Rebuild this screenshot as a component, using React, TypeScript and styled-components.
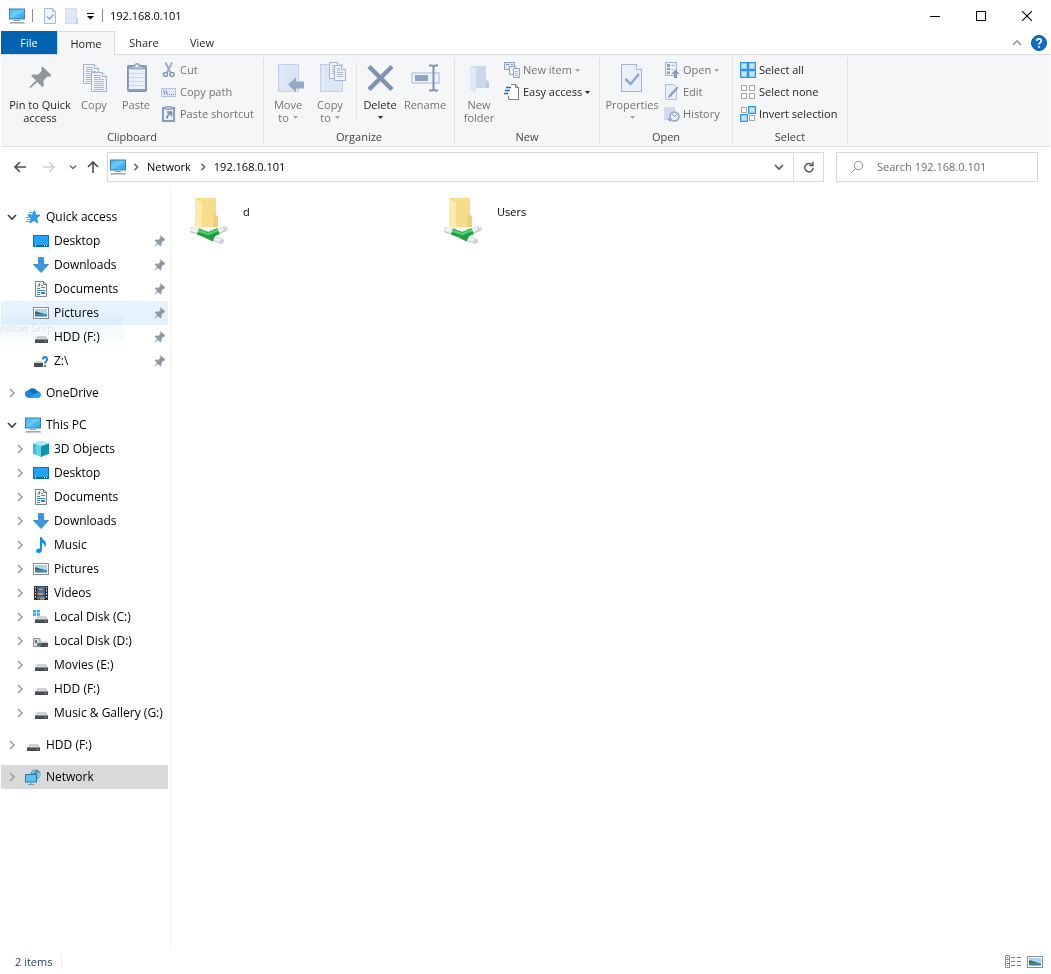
import React from 'react';
import styled, { createGlobalStyle, css } from 'styled-components';

const GlobalStyle = createGlobalStyle`
  *, *::before, *::after { box-sizing: border-box; }
  body {
    margin: 0;
    background: #fff;
    color: #000;
    font: 11px/16px "Open Sans", "Noto Sans", sans-serif;
  }
  button, input {
    font: inherit;
    color: inherit;
    margin: 0;
    padding: 0;
    border: 0;
    background: none;
  }
  ul { list-style: none; margin: 0; padding: 0; }
  a { color: inherit; text-decoration: none; }
  svg { display: block; flex: none; }
`;

/* ---------- icons ---------- */

const Svg = ({ w, h, children }: { w: number; h: number; children: React.ReactNode }) => (
  <svg width={w} height={h} viewBox={`0 0 ${w} ${h}`} fill="none" aria-hidden="true">
    {children}
  </svg>
);

const ComputerIcon = () => (
  <Svg w={16} h={16}>
    <defs>
      <linearGradient id="screen" x1="0" y1="0" x2="1" y2="1">
        <stop offset="0" stopColor="#3fb4f5" />
        <stop offset="0.5" stopColor="#6ecbfb" />
        <stop offset="0.55" stopColor="#4dbcf8" />
        <stop offset="1" stopColor="#2fa6ee" />
      </linearGradient>
    </defs>
    <rect x="0.5" y="1" width="15" height="10" fill="url(#screen)" stroke="#3f7fa8" />
    <path d="M7 11.500h2.500V13H7z" fill="#c4ced6" />
    <path d="M5 12.500h6" stroke="#8fa0ae" />
    <path d="M1 14.500h14.500" stroke="#9aa8b8" />
    <path d="M0 15.500h16" stroke="#c3ccd6" />
  </Svg>
);

const TitleCheckIcon = () => (
  <Svg w={14} h={16}>
    <path d="M1.5.5h8l3 3v12h-11z" fill="#eef4fc" stroke="#a9bbd4" />
    <path d="M9.500.5v3h3" stroke="#a9bbd4" />
    <path d="M4 8.500l2.500 2.500 4-4.500" stroke="#8fa3c2" strokeWidth="1.500" />
  </Svg>
);

const TitleFolderIcon = () => (
  <Svg w={14} h={16}>
    <path d="M.5.5h11v10h1.500v5H.5z" fill="#dfe8f6" stroke="#cfdbee" />
    <path d="M11.500 10.500v5" stroke="#b9c9e2" />
  </Svg>
);

const PinIcon = () => (
  <Svg w={32} h={32}>
    <g fill="#8e979c">
      <path d="M18.500 4.500l8.800 8.500-1.300 1.800-2.500-.3-4 4 .3 5-1.500 1.500-5-5L6.500 26l-1-1 6.500-6.500-4.800-4.500L8.800 12.500l5 .3 4-4-.6-2.600z" />
    </g>
  </Svg>
);

const SmallPin = () => (
  <Svg w={12} h={12}>
    <path d="M7 .5l4.500 4.500-1 .8-1-.3L7.500 8v2.500l-1 1L4 9 .8 11.500l-.3-.3L3 8 .8 5.600l1-1 2.600.1 2.200-2L6 1.500z" fill="#8d99a1" />
  </Svg>
);

const sheet = '#a3b4d0';
const Sheet = ({ x, y, w, h, n }: { x: number; y: number; w: number; h: number; n: number }) => (
  <g transform={`translate(${x} ${y})`}>
    <path d={`M.5.5h${w - 5}l4 4v${h - 5}H.5z`} fill="#eef3fb" stroke={sheet} />
    <path d={`M${w - 4.5}.5v4h4`} stroke={sheet} fill="#fff" />
    {Array.from({ length: n }, (_, i) => (
      <path key={i} d={`M3 ${3.5 + i * 2}h${i < 2 ? w - 9 : w - 6}`} stroke="#a9bbd8" />
    ))}
  </g>
);

const CopyIcon = () => (
  <Svg w={32} h={32}>
    <Sheet x={5} y={2} w={16} h={20} n={8} />
    <Sheet x={13} y={10} w={16} h={20} n={8} />
  </Svg>
);

const PasteIcon = () => (
  <Svg w={32} h={32}>
    <rect x="7.500" y="3.500" width="19" height="26" rx="1" fill="#8ca0c4" stroke="#7e92b8" />
    <rect x="9" y="7" width="16" height="20" fill="#eaf1fb" />
    <path d="M9 11.500h16M9 15.500h16M9 19.500h16M9 23.500h16" stroke="#cbd8ea" />
    <path d="M11 7V4.500h3a3 3 0 0 1 6 0h3V7z" fill="#b5c0d2" stroke="#93a2bd" />
    <circle cx="17" cy="4" r="1" fill="#fff" />
  </Svg>
);

const CutIcon = () => (
  <Svg w={16} h={16}>
    <path d="M4.500 0.500l5 10M11 .5l-5 10" stroke="#9dabc1" strokeWidth="1.800" />
    <circle cx="4.500" cy="12.500" r="2" stroke="#8497b8" strokeWidth="1.600" />
    <circle cx="11" cy="12.500" r="2" stroke="#8497b8" strokeWidth="1.600" />
  </Svg>
);

const CopyPathIcon = () => (
  <Svg w={16} h={16}>
    <rect x=".5" y="4.500" width="14" height="8" fill="#dfe8f5" stroke="#b3c2da" />
    <path d="M2.500 6.500l1.500 4M5 6.500l1.500 4" stroke="#6a7ea4" />
    <path d="M8 10.500h1M10 10.500h1M12 10.500h1" stroke="#6a7ea4" />
  </Svg>
);

const PasteShortcutIcon = () => (
  <Svg w={16} h={16}>
    <rect x="2" y="2" width="11" height="13" fill="#eaf1fb" stroke="#8a9dc0" strokeWidth="2" />
    <path d="M4.500.5h6v3h-6z" fill="#b5c2d8" stroke="#93a5c4" />
    <path d="M6 6h4.500v4.500M10 6.500C7.500 8 6 9 6 12.500" stroke="#7387ae" strokeWidth="1.600" />
  </Svg>
);

const MoveToIcon = () => (
  <Svg w={32} h={32}>
    <path d="M6.500 2.500h20v27h-20z" fill="#dbe5f4" stroke="#c3d1e8" />
    <path d="M9.500 3v26" stroke="#e8effa" />
    <path d="M16 22.500l8-7v4h8v7h-8v4z" fill="#96a6c5" />
  </Svg>
);

const CopyToIcon = () => (
  <Svg w={32} h={32}>
    <path d="M6.500 2.500h22v27h-22z" fill="#dbe5f4" stroke="#c3d1e8" />
    <path d="M9.500 3v26" stroke="#e8effa" />
    <Sheet x={15} y={0} w={13} h={17} n={5} />
    <Sheet x={20} y={3} w={12} h={16} n={5} />
  </Svg>
);

const DeleteIcon = () => (
  <Svg w={32} h={32}>
    <path d="M5 4.500l23 23M28 4.500l-23 23" stroke="#7f92b6" strokeWidth="4.500" />
  </Svg>
);

const RenameIcon = () => (
  <Svg w={32} h={32}>
    <rect x="3" y="11" width="27" height="10" fill="#eef4fc" stroke="#a7b9d4" strokeWidth="1" />
    <rect x="6" y="13" width="13" height="6" fill="#8fa2c3" />
    <path d="M20 3.500h2.500q2 0 2 2q0-2 2-2H29M20 28.500h2.500q2 0 2-2q0 2 2 2H29M24.500 5v22" stroke="#7f92b6" strokeWidth="2" />
  </Svg>
);

const NewFolderIcon = () => (
  <Svg w={32} h={32}>
    <path d="M9 4h14v14l3 2v6H9z" fill="#ccd9ea" />
    <path d="M7 3l6 4v24l-6-4z" fill="#dfe9f6" />
    <path d="M23 18l3 2v6h-3z" fill="#bccce0" />
  </Svg>
);

const NewItemIcon = () => (
  <Svg w={16} h={16}>
    <rect x=".5" y=".5" width="10" height="7" fill="#dfe8f5" stroke="#90a4c6" />
    <path d="M2 2.500h3M7 2.500h2" stroke="#7f92b6" />
    <path d="M5.500 4.500h6v8h-6z" fill="#eef4fc" stroke="#90a4c6" />
    <path d="M9.500 6.500h6v9h-6z" fill="#eef4fc" stroke="#90a4c6" />
    <path d="M11 9.500h3M11 11.500h3M11 13.500h3" stroke="#a9bbd8" />
  </Svg>
);

const EasyAccessIcon = () => (
  <Svg w={16} h={16}>
    <path d="M4.500 8.500v7h10v-12l-3-3h-7z" fill="#fff" />
    <path d="M7 .5h4.500l3 3v12h-10V12" stroke="#7f7f7f" />
    <path d="M11.500.5v3h3" stroke="#7f7f7f" />
    <path d="M2 3.500h5M1 6.500h5M0 9.500h4" stroke="#1d6fae" strokeWidth="1.500" />
  </Svg>
);

const PropertiesIcon = () => (
  <Svg w={32} h={32}>
    <path d="M5.500 2.500h15l5 5v22h-20z" fill="#e8f0fb" stroke="#a3b4d0" />
    <path d="M20.500 2.500v5h5" fill="#fff" stroke="#a3b4d0" />
    <path d="M9.500 17l5 5 8.500-10" stroke="#94a6c6" strokeWidth="2.500" />
  </Svg>
);

const OpenIcon = () => (
  <Svg w={16} h={16}>
    <rect x="1.500" y=".5" width="11" height="13" fill="#edf3fb" stroke="#a3b4d0" />
    <path d="M3 2h3v3H3zM3 6h3v2H3zM3 9.500h3v2.500H3z" fill="#8c9fc1" />
    <path d="M7.500 3.500h3.500M7.500 7.500h2" stroke="#a3b4d0" />
    <path d="M11.500 7.500l4 4.500h-2.500v4h-3v-4H7.500z" fill="#8699bc" />
  </Svg>
);

const EditIcon = () => (
  <Svg w={16} h={16}>
    <path d="M1.500.5h8l3 3v12h-11z" fill="#e8f0fb" stroke="#b0c0d9" />
    <path d="M4 14l1-3 8-8.500 1.500 1.500-8 9z" fill="#8c9fc1" />
  </Svg>
);

const HistoryIcon = () => (
  <Svg w={16} h={16}>
    <path d="M0 1h11v13H0z" fill="#d0dcee" />
    <circle cx="10.500" cy="10.500" r="4.500" fill="#e6eefa" stroke="#92a4c3" strokeWidth="1.500" />
    <path d="M8 8l2.500 2.500L13 8" stroke="#7f92b6" />
    <path d="M4 13l3 2" stroke="#92a4c3" strokeWidth="2" />
  </Svg>
);

type TileState = [boolean, boolean, boolean, boolean];
const SelectIcon = ({ on }: { on: TileState }) => {
  const spots = [[0, 0], [8, 0], [0, 8], [8, 8]];
  return (
    <Svg w={16} h={16}>
      {spots.map(([x, y], i) =>
        on[i] ? (
          <g key={i}>
            <rect x={x} y={y} width="8" height="8" fill="#2f93dd" />
            <rect x={x + 1} y={y + 1} width="6" height="6" fill="#8fd0fb" />
            <rect x={x + 2} y={y + 2} width="4" height="4" fill="#c4e6fd" />
          </g>
        ) : (
          <rect key={i} x={x + 1.5} y={y + 1.5} width="5" height="5" fill="#fff" stroke="#a5a5a5" />
        ),
      )}
    </Svg>
  );
};

const Caret = ({ color }: { color: string }) => (
  <Svg w={5} h={3}>
    <path d="M0 0h5L2.500 3z" fill={color} />
  </Svg>
);

const Chevron = ({ dir, color, size = 10 }: { dir: 'right' | 'down' | 'up'; color: string; size?: number }) => {
  const paths = { right: 'M3 1l4 4-4 4', down: 'M1 3l4 4 4-4', up: 'M1 7l4-4 4 4' };
  return (
    <svg width={size} height={size} viewBox="0 0 10 10" fill="none" aria-hidden="true">
      <path d={paths[dir]} stroke={color} strokeWidth="1.700" />
    </svg>
  );
};

const Arrow = ({ dir, color }: { dir: 'left' | 'right' | 'up'; color: string }) => {
  const paths = {
    left: 'M13 7H2M7 2L2 7l5 5',
    right: 'M1 7h11M7 2l5 5-5 5',
    up: 'M7 13V2M2 7l5-5 5 5',
  };
  return (
    <Svg w={14} h={14}>
      <path d={paths[dir]} stroke={color} strokeWidth="1.600" />
    </Svg>
  );
};

const StarIcon = () => (
  <Svg w={16} h={16}>
    <path d="M9.500 1.500l1.300 4.500 4.200.2-3.400 3 1.200 4.800-4-2.500L5 14l1-4.500L3 6.500l4.500-.4z" fill="#2ba2f0" stroke="#1c7fcb" strokeWidth=".7" />
    <path d="M4 3.500h4M3 5.500h3M1 8.500h4M2 10.500h3M1 12.500h4" stroke="#4bb1f2" />
  </Svg>
);

const DesktopIcon = () => (
  <Svg w={16} h={16}>
    <rect x=".5" y="2.500" width="15" height="11" fill="#1fa3f8" stroke="#0f6fb8" />
    <path d="M1 12.500h14" stroke="#0b5e9f" />
    <path d="M2 12.500h1M11 12.500h1M13 12.500h1" stroke="#fff" />
  </Svg>
);

const DownloadIcon = () => (
  <Svg w={16} h={16}>
    <path d="M5.500.5h5v7h5L8 15.500.5 7.500h5z" fill="#3d96e3" stroke="#2f80cc" strokeWidth=".8" />
  </Svg>
);

const DocumentIcon = () => (
  <Svg w={16} h={16}>
    <path d="M2.500.5h8l3 3v12h-11z" fill="#fff" stroke="#7d8387" />
    <path d="M10.500.5v3h3" stroke="#7d8387" />
    <path d="M4.500 5.500L6.500 2.500v3M8 4.500h2M8 6.500h4M4 7.500h3M4 9.500h8M4 11.500h3M4 13.500h3" stroke="#2f8bc9" />
    <path d="M8 11h4v2H8z" fill="#3f7fae" />
  </Svg>
);

const PictureIcon = () => (
  <Svg w={16} h={16}>
    <rect x=".5" y="2.500" width="15" height="11" fill="#fff" stroke="#8d8d8d" />
    <path d="M2 4h12v8H2z" fill="#a9d4f6" />
    <path d="M2 6.500c4 0 6 2 12 3H2z" fill="#3e6b5e" />
    <path d="M2 9.500h12V11H2z" fill="#3877ae" />
    <path d="M2 11h12v1H2z" fill="#8fc0e4" />
  </Svg>
);

const Drive = () => (
  <g>
    <path d="M4 6h9l2 3.500H2z" fill="#d2d4d6" />
    <path d="M2 9h13v4H2z" fill="#4a4d50" />
    <path d="M2 9.500h13" stroke="#8d9092" />
    <path d="M12 11.500h1" stroke="#3fe05a" />
  </g>
);

const DriveIcon = () => (
  <Svg w={16} h={16}>
    <g transform="translate(0 1)">
      <Drive />
    </g>
  </Svg>
);

const UnknownDriveIcon = () => (
  <Svg w={16} h={16}>
    <path d="M3 8h6l1 2H1z" fill="#d2d4d6" />
    <path d="M1 10h9v4H1z" fill="#4a4d50" />
    <path d="M10 6.500Q10 4 12 4T14 6.500Q14 8 12.800 8.700Q12 9.300 12 10.500M12 12v2" stroke="#1f7fd0" strokeWidth="2" />
  </Svg>
);

const SystemDriveIcon = () => (
  <Svg w={16} h={16}>
    <g transform="translate(0 1)">
      <Drive />
    </g>
    <path d="M0 1h3v2.500H0zM3.800 1h3v2.500h-3zM0 4.300h3v2.500H0zM3.800 4.300h3v2.500h-3z" fill="#12b4ef" />
  </Svg>
);

const SharedDriveIcon = () => (
  <Svg w={16} h={16}>
    <path d="M8 8h6l1 2H7z" fill="#d2d4d6" />
    <path d="M7 10h8v4H7z" fill="#4a4d50" />
    <path d="M.5 5.500h6.500v8H.5z" fill="#d9dfdd" stroke="#8c9494" />
    <path d="M2 7h2v3H2zM4 10h3v3H4z" fill="#5f7a80" />
    <path d="M13 12.500h1" stroke="#3fe05a" />
  </Svg>
);

const CloudIcon = () => (
  <Svg w={16} h={16}>
    <path d="M4 12.500a3.500 3.500 0 0 1-.5-7A4.800 4.800 0 0 1 12 6a3.300 3.300 0 0 1 .5 6.500z" fill="#0f6cc4" />
    <path d="M4 12.500a3.500 3.500 0 0 1-.5-7L9 8.500l3.500 4z" fill="#1a86de" />
    <path d="M4 12.800l6-4 4-1.800a3 3 0 0 1-1.500 5.800z" fill="#2ba0f0" />
  </Svg>
);

const CubeIcon = () => (
  <Svg w={16} h={16}>
    <path d="M8 0l8 2.500v10L8 16 0 12.500v-10z" fill="#5fd3e4" />
    <path d="M8 5l8-2.500v10L8 16z" fill="#0c92ae" />
    <path d="M8 0l8 2.500L8 5 0 2.500z" fill="#a4ebf3" />
    <path d="M0 2.500L3 3.500v10L0 12.500z" fill="#35bcd3" />
  </Svg>
);

const MusicIcon = () => (
  <Svg w={16} h={16}>
    <path d="M7 0h1.800c.3 3 4.200 3.500 4.200 7 0 1.500-.6 2.500-1.500 3.500.6-2.500-.5-4-2.500-4.700V13c0 1.700-1.500 3-3.500 3C3.800 16 3 15.100 3 14c0-1.600 1.800-2.700 4-2.500z" fill="#0f93ea" />
  </Svg>
);

const VideoIcon = () => (
  <Svg w={16} h={16}>
    <path d="M1 1h14v14H1z" fill="#2d2d2d" />
    <path d="M2.500 2v12M13.500 2v12" stroke="#e8e8e8" strokeDasharray="1.500 1.500" />
    <path d="M4 1.500h8v4H4zM4 6h8v4H4zM4 10.500h8v4H4z" fill="#3b6fb8" />
    <path d="M6 3.500h4v2H6zM5 8h5v2H5zM7 12.500h4v2H7z" fill="#d99a36" />
  </Svg>
);

const NetworkIcon = () => (
  <Svg w={16} h={16}>
    <circle cx="10.500" cy="5.500" r="5" fill="#3f8dbb" />
    <path d="M7 3q3-3 4-2l-1 2-3 2zM12 3l3 1v4l-3 1z" fill="#8cc6e2" />
    <rect x=".5" y="5.500" width="11" height="7.500" fill="#5cc4fb" stroke="#2777a8" />
    <path d="M6 13v2M3 15.500h6" stroke="#7795a8" />
  </Svg>
);

const SharedFolderIcon = () => (
  <Svg w={40} h={48}>
    <path d="M5 1h21v17l2 2v10H5z" fill="#f7dc8c" />
    <path d="M24 16l4 4v10h-5z" fill="#f0ce72" />
    <path d="M5 1l7 5v27l-7-4z" fill="#fdebae" />
    <path d="M2 33l8 2M27 35l8-3.500M22 41l9 3" stroke="#bfc5c5" strokeWidth="5.500" strokeLinecap="round" />
    <path d="M2 32.500l8 2M27 34.500l8-3.500M22 40.500l8 3" stroke="#eff1f1" strokeWidth="4" strokeLinecap="round" />
    <path d="M8 34.500l8 3 8 4M17 39l11.500-5" stroke="#1f9e45" strokeWidth="6.500" strokeLinejoin="round" />
    <path d="M8 33.500l9 3M17 37.500l11-4.500" stroke="#4fd06c" strokeWidth="2.500" />
    <circle cx="34.500" cy="31.500" r="1.500" fill="#cfd4d4" />
    <circle cx="30.500" cy="44" r="1.500" fill="#cfd4d4" />
  </Svg>
);

/* ---------- window frame ---------- */

const Window = styled.div`
  display: flex;
  flex-direction: column;
  min-height: 100vh;
  padding: 0 1px;
`;

const TitleBar = styled.header`
  display: flex;
  align-items: center;
  height: 31px;
  padding-left: 8px;
`;

const TitleRule = styled.span`
  width: 1px;
  height: 13px;
  margin: 0 7px;
  background: #8a8a8a;
`;

const QuickTools = styled.div`
  display: flex;
  align-items: center;
  gap: 8px;
  margin-left: 3px;
`;

const IconButton = styled.button<{ $w?: number; $h?: number }>`
  display: flex;
  align-items: center;
  justify-content: center;
  flex: none;
  width: ${({ $w }) => ($w ? `${$w}px` : 'auto')};
  height: ${({ $h }) => ($h ? `${$h}px` : 'auto')};
`;

const Title = styled.h1`
  flex: 1;
  margin: 0;
  font-size: 11px;
  line-height: 16px;
  font-weight: 400;
`;

const TabBar = styled.nav`
  display: flex;
  height: 24px;
  border-bottom: 1px solid #dadbdc;
`;

const Tab = styled.button<{ $kind?: 'file' | 'active' }>`
  width: 58px;
  height: 23px;
  color: #262626;
  ${({ $kind }) =>
    $kind === 'file' &&
    css`
      width: 56px;
      background: #0063b1;
      color: #fff;
    `}
  ${({ $kind }) =>
    $kind === 'active' &&
    css`
      height: 24px;
      border: 1px solid #dadbdc;
      border-bottom: 0;
      background: #f5f6f7;
    `}
`;

const TabActions = styled.div`
  display: flex;
  align-items: center;
  gap: 9px;
  margin-left: auto;
  padding-right: 3px;
`;

/* ---------- ribbon ---------- */

const Ribbon = styled.div`
  display: flex;
  height: 92px;
  padding: 3px 0 2px;
  background: #f5f6f7;
  border-bottom: 1px solid #dadbdc;
`;

const Group = styled.section<{ $w: number }>`
  display: flex;
  flex-direction: column;
  flex: none;
  width: ${({ $w }) => $w}px;
  border-right: 1px solid #e1e2e3;
  padding: 0 3px;
`;

const GroupBody = styled.div`
  display: flex;
  flex: 1;
`;

const GroupName = styled.h2`
  margin: 0;
  font-size: 11px;
  line-height: 14px;
  font-weight: 400;
  text-align: center;
  color: #444;
`;

const BigButton = styled.button<{ $w: number; $off?: boolean }>`
  display: flex;
  flex-direction: column;
  align-items: center;
  flex: none;
  width: ${({ $w }) => $w}px;
  padding-top: 4px;
  line-height: 13px;
  white-space: nowrap;
  color: ${({ $off }) => ($off ? '#737373' : '#262626')};
`;

const BigLabel = styled.span`
  display: flex;
  flex-direction: column;
  align-items: center;
  margin-top: 4px;
`;

const LabelLine = styled.span`
  display: flex;
  align-items: center;
  gap: 4px;
  min-height: 12px;
`;

const GroupRule = styled.span`
  width: 1px;
  height: 56px;
  margin: 5px 1px 0 5px;
  background: #e1e2e3;
`;

const Commands = styled.div<{ $left: number }>`
  display: flex;
  flex-direction: column;
  padding: 1px 0 0 ${({ $left }) => $left}px;
`;

const Command = styled.button<{ $off?: boolean }>`
  display: flex;
  align-items: center;
  gap: 3px;
  height: 22px;
  white-space: nowrap;
  color: ${({ $off }) => ($off ? '#737373' : '#262626')};
`;

/* ---------- address bar ---------- */

const AddressBar = styled.div`
  display: flex;
  align-items: center;
  height: 40px;
  padding: 0 12px 0 8px;
`;

const AddressBox = styled.div`
  display: flex;
  align-items: center;
  flex: 1;
  height: 30px;
  padding-left: 2px;
  border: 1px solid #d9d9d9;
`;

const Crumb = styled.a`
  margin: 0 8px 0 7px;
`;

const CrumbGap = styled.span`
  display: flex;
  margin-left: 6px;
`;

const AddressEnd = styled.div`
  display: flex;
  align-self: stretch;
  margin-left: auto;
`;

const Refresh = styled(IconButton)`
  border-left: 1px solid #d9d9d9;
`;

const SearchBox = styled.label`
  display: flex;
  align-items: center;
  gap: 13px;
  width: 202px;
  height: 30px;
  margin-left: 12px;
  padding-left: 13px;
  border: 1px solid #d9d9d9;
`;

const SearchInput = styled.input`
  flex: 1;
  min-width: 0;
  outline: 0;
  &::placeholder { color: #6d6d6d; opacity: 1; }
`;

/* ---------- body ---------- */

const Body = styled.div`
  display: flex;
  flex: 1;
`;

const Sidebar = styled.nav`
  position: relative;
  width: 170px;
  padding: 18px 2px 0 0;
  border-right: 1px solid #f3f3f3;
`;

const Branch = styled.ul`
  margin-bottom: 8px;
`;

const TreeButton = styled.button<{ $level: number; $tone?: 'hover' | 'selected' }>`
  display: flex;
  align-items: center;
  width: 100%;
  height: 24px;
  padding: 0 2px 0 ${({ $level }) => 5 + $level * 8}px;
  font-size: 12px;
  text-align: left;
  white-space: nowrap;
  background: ${({ $tone }) => ($tone === 'hover' ? '#e5f3ff' : $tone === 'selected' ? '#d9d9d9' : 'transparent')};
`;

const Twisty = styled.span`
  display: flex;
  justify-content: center;
  width: 12px;
  margin-right: 7px;
`;

const TreeLabel = styled.span`
  flex: 1;
  margin-left: 5px;
`;

const DragTip = styled.div`
  position: absolute;
  top: 130px;
  left: -1px;
  width: 123px;
  height: 22px;
  line-height: 22px;
  background: #f5fafd;
  color: #e6e0e2;
  mix-blend-mode: multiply;
  pointer-events: none;
`;

const Content = styled.main`
  flex: 1;
  padding: 10px 0 0 19px;
`;

const Files = styled.ul`
  display: grid;
  grid-template-columns: repeat(auto-fill, 254px);
`;

const FileButton = styled.button`
  display: flex;
  align-items: flex-start;
  gap: 13px;
  width: 240px;
  text-align: left;
`;

const FileName = styled.span`
  margin-top: 7px;
`;

const StatusBar = styled.footer`
  display: flex;
  align-items: center;
  height: 24px;
  padding: 0 7px 0 14px;
  color: #1e395b;
`;

const StatusCount = styled.span`
  padding-right: 9px;
  border-right: 1px solid #f0f0f0;
`;

const Views = styled.div`
  display: flex;
  gap: 6px;
  margin-left: auto;
`;

/* ---------- composition ---------- */

const OFF = '#a6a6a6';

const Big = ({ icon, lines, w, off, caret }: { icon: React.ReactNode; lines: string[]; w: number; off?: boolean; caret?: 'inline' | 'below' }) => (
  <BigButton type="button" $w={w} $off={off}>
    {icon}
    <BigLabel>
      {lines.map((line, i) => (
        <LabelLine key={line}>
          {line}
          {caret === 'inline' && i === lines.length - 1 && <Caret color={OFF} />}
        </LabelLine>
      ))}
      {caret === 'below' && (
        <LabelLine>
          <Caret color={off ? OFF : '#262626'} />
        </LabelLine>
      )}
    </BigLabel>
  </BigButton>
);

const Small = ({ icon, text, off, caret }: { icon: React.ReactNode; text: string; off?: boolean; caret?: boolean }) => (
  <Command type="button" $off={off}>
    {icon}
    {text}
    {caret && <Caret color={off ? OFF : '#262626'} />}
  </Command>
);

interface Node {
  label: string;
  icon: React.ReactNode;
  level: number;
  twisty?: 'right' | 'down';
  pinned?: boolean;
  tone?: 'hover' | 'selected';
}

const quick = (label: string, icon: React.ReactNode, tone?: 'hover'): Node => ({ label, icon, level: 1, pinned: true, tone });
const child = (label: string, icon: React.ReactNode): Node => ({ label, icon, level: 1, twisty: 'right' });

const tree: Node[][] = [
  [
    { label: 'Quick access', icon: <StarIcon />, level: 0, twisty: 'down' },
    quick('Desktop', <DesktopIcon />),
    quick('Downloads', <DownloadIcon />),
    quick('Documents', <DocumentIcon />),
    quick('Pictures', <PictureIcon />, 'hover'),
    quick('HDD (F:)', <DriveIcon />),
    quick('Z:\\', <UnknownDriveIcon />),
  ],
  [{ label: 'OneDrive', icon: <CloudIcon />, level: 0, twisty: 'right' }],
  [
    { label: 'This PC', icon: <ComputerIcon />, level: 0, twisty: 'down' },
    child('3D Objects', <CubeIcon />),
    child('Desktop', <DesktopIcon />),
    child('Documents', <DocumentIcon />),
    child('Downloads', <DownloadIcon />),
    child('Music', <MusicIcon />),
    child('Pictures', <PictureIcon />),
    child('Videos', <VideoIcon />),
    child('Local Disk (C:)', <SystemDriveIcon />),
    child('Local Disk (D:)', <SharedDriveIcon />),
    child('Movies (E:)', <DriveIcon />),
    child('HDD (F:)', <DriveIcon />),
    child('Music & Gallery (G:)', <DriveIcon />),
  ],
  [{ label: 'HDD (F:)', icon: <DriveIcon />, level: 0, twisty: 'right' }],
  [{ label: 'Network', icon: <NetworkIcon />, level: 0, twisty: 'right', tone: 'selected' }],
];

export default function App() {
  return (
    <Window>
      <GlobalStyle />
      <TitleBar>
        <ComputerIcon />
        <TitleRule />
        <QuickTools>
          <IconButton type="button" aria-label="Properties"><TitleCheckIcon /></IconButton>
          <IconButton type="button" aria-label="New folder"><TitleFolderIcon /></IconButton>
          <IconButton type="button" aria-label="Customize toolbar" $w={8}>
            <Svg w={8} h={8}>
              <path d="M0 1.500h7" stroke="#000" />
              <path d="M0 4h7L3.500 7.500z" fill="#000" />
            </Svg>
          </IconButton>
        </QuickTools>
        <TitleRule />
        <Title>192.168.0.101</Title>
        <IconButton type="button" aria-label="Minimize" $w={46} $h={30}>
          <Svg w={10} h={10}><path d="M0 5.500h10" stroke="#000" /></Svg>
        </IconButton>
        <IconButton type="button" aria-label="Maximize" $w={46} $h={30}>
          <Svg w={10} h={10}><path d="M.5.5h9v9h-9z" stroke="#000" /></Svg>
        </IconButton>
        <IconButton type="button" aria-label="Close" $w={46} $h={30}>
          <Svg w={10} h={10}><path d="M0 0l10 10M10 0L0 10" stroke="#000" strokeWidth="1.100" /></Svg>
        </IconButton>
      </TitleBar>

      <TabBar>
        <Tab type="button" $kind="file">File</Tab>
        <Tab type="button" $kind="active">Home</Tab>
        <Tab type="button">Share</Tab>
        <Tab type="button">View</Tab>
        <TabActions>
          <IconButton type="button" aria-label="Collapse ribbon"><Chevron dir="up" color="#9a9a9a" /></IconButton>
          <IconButton type="button" aria-label="Help">
            <svg width="16" height="16" viewBox="0 0 16 16" fill="none" aria-hidden="true">
              <circle cx="8" cy="8" r="7.500" fill="#0f6fd0" stroke="#0a4f98" />
              <path d="M5.700 6Q5.700 3.800 8 3.800T10.300 6Q10.300 7.200 9 7.800Q8 8.400 8 9.500M8 11v1.800" stroke="#fff" strokeWidth="1.700" />
            </svg>
          </IconButton>
        </TabActions>
      </TabBar>

      <Ribbon>
        <Group $w={263}>
          <GroupBody>
            <Big w={72} icon={<PinIcon />} lines={['Pin to Quick', 'access']} />
            <Big w={36} off icon={<CopyIcon />} lines={['Copy']} />
            <Big w={48} off icon={<PasteIcon />} lines={['Paste']} />
            <Commands $left={1}>
              <Small off icon={<CutIcon />} text="Cut" />
              <Small off icon={<CopyPathIcon />} text="Copy path" />
              <Small off icon={<PasteShortcutIcon />} text="Paste shortcut" />
            </Commands>
          </GroupBody>
          <GroupName>Clipboard</GroupName>
        </Group>
        <Group $w={191}>
          <GroupBody>
            <Big w={42} off icon={<MoveToIcon />} lines={['Move', 'to']} caret="inline" />
            <Big w={42} off icon={<CopyToIcon />} lines={['Copy', 'to']} caret="inline" />
            <GroupRule />
            <Big w={44} icon={<DeleteIcon />} lines={['Delete']} caret="below" />
            <Big w={46} off icon={<RenameIcon />} lines={['Rename']} />
          </GroupBody>
          <GroupName>Organize</GroupName>
        </Group>
        <Group $w={145}>
          <GroupBody>
            <Big w={42} off icon={<NewFolderIcon />} lines={['New', 'folder']} />
            <Commands $left={4}>
              <Small off icon={<NewItemIcon />} text="New item" caret />
              <Small icon={<EasyAccessIcon />} text="Easy access" caret />
            </Commands>
          </GroupBody>
          <GroupName>New</GroupName>
        </Group>
        <Group $w={133}>
          <GroupBody>
            <Big w={58} off icon={<PropertiesIcon />} lines={['Properties']} caret="below" />
            <Commands $left={3}>
              <Small off icon={<OpenIcon />} text="Open" caret />
              <Small off icon={<EditIcon />} text="Edit" />
              <Small off icon={<HistoryIcon />} text="History" />
            </Commands>
          </GroupBody>
          <GroupName>Open</GroupName>
        </Group>
        <Group $w={115}>
          <GroupBody>
            <Commands $left={4}>
              <Small icon={<SelectIcon on={[true, true, true, true]} />} text="Select all" />
              <Small icon={<SelectIcon on={[false, false, false, false]} />} text="Select none" />
              <Small icon={<SelectIcon on={[false, true, true, false]} />} text="Invert selection" />
            </Commands>
          </GroupBody>
          <GroupName>Select</GroupName>
        </Group>
      </Ribbon>

      <AddressBar>
        <IconButton type="button" aria-label="Back" $w={22} $h={30}><Arrow dir="left" color="#4d4d4d" /></IconButton>
        <IconButton type="button" aria-label="Forward" $w={36} $h={30}><Arrow dir="right" color="#d0d0d0" /></IconButton>
        <IconButton type="button" aria-label="Recent locations" $w={12} $h={30}><Chevron dir="down" color="#6a6a6a" size={8} /></IconButton>
        <IconButton type="button" aria-label="Up" $w={28} $h={30}><Arrow dir="up" color="#4d4d4d" /></IconButton>
        <AddressBox>
          <ComputerIcon />
          <CrumbGap><Chevron dir="right" color="#5a5a5a" size={8} /></CrumbGap>
          <Crumb href="#network">Network</Crumb>
          <Chevron dir="right" color="#5a5a5a" size={8} />
          <Crumb href="#host">192.168.0.101</Crumb>
          <AddressEnd>
            <IconButton type="button" aria-label="Previous locations" $w={28}><Chevron dir="down" color="#5a5a5a" /></IconButton>
            <Refresh type="button" aria-label="Refresh" $w={30}>
              <Svg w={12} h={12}>
                <path d="M9.300 4A4.200 4.200 0 1 0 10.200 6.800" stroke="#5a5a5a" strokeWidth="1.500" />
                <path d="M10 .8v3.700H6.300" stroke="#5a5a5a" strokeWidth="1.400" />
              </Svg>
            </Refresh>
          </AddressEnd>
        </AddressBox>
        <SearchBox>
          <Svg w={14} h={14}>
            <circle cx="8.500" cy="5.500" r="4.200" stroke="#8a8a8a" />
            <path d="M5.500 8.500L1 13" stroke="#8a8a8a" />
          </Svg>
          <SearchInput type="text" aria-label="Search" placeholder="Search 192.168.0.101" />
        </SearchBox>
      </AddressBar>

      <Body>
        <Sidebar aria-label="Folders">
          {tree.map((branch, b) => (
            <Branch key={b}>
              {branch.map((node) => (
                <li key={node.label}>
                  <TreeButton type="button" $level={node.level} $tone={node.tone}>
                    <Twisty>
                      {node.twisty && <Chevron dir={node.twisty} color={node.twisty === 'down' ? '#404040' : '#a0a0a0'} />}
                    </Twisty>
                    {node.icon}
                    <TreeLabel>{node.label}</TreeLabel>
                    {node.pinned && <SmallPin />}
                  </TreeButton>
                </li>
              ))}
            </Branch>
          ))}
          <DragTip>ndow Snip</DragTip>
        </Sidebar>
        <Content>
          <Files>
            {['d', 'Users'].map((name) => (
              <li key={name}>
                <FileButton type="button">
                  <SharedFolderIcon />
                  <FileName>{name}</FileName>
                </FileButton>
              </li>
            ))}
          </Files>
        </Content>
      </Body>

      <StatusBar>
        <StatusCount>2 items</StatusCount>
        <Views>
          <IconButton type="button" aria-label="Details view">
            <Svg w={16} h={14}>
              <path d="M.5.5h4v12h-4zM.5 4.500h4M.5 8.500h4" stroke="#8d8d8d" />
              <path d="M6 2.500h4M12 2.500h4M6 6.500h4M12 6.500h4M6 10.500h4M12 10.500h4" stroke="#7a7a7a" />
              <path d="M2 2.500h1" stroke="#444" />
              <path d="M2 6.500h1" stroke="#2f8fe0" />
              <path d="M2 10.500h1" stroke="#d03030" />
            </Svg>
          </IconButton>
          <IconButton type="button" aria-label="Large icons view"><PictureIcon /></IconButton>
        </Views>
      </StatusBar>
    </Window>
  );
}
